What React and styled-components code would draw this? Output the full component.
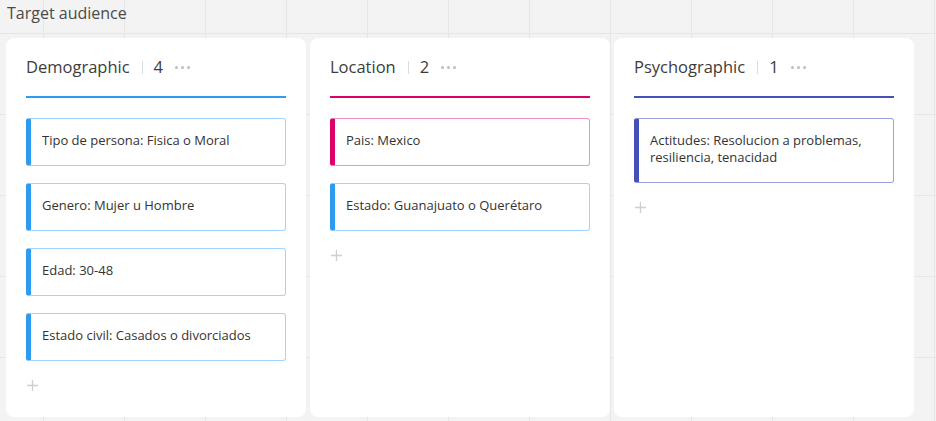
import styled, { createGlobalStyle } from 'styled-components';

const GlobalStyle = createGlobalStyle`
  html, body {
    margin: 0;
    padding: 0;
    height: 100%;
  }

  body {
    font-family: "Open Sans", "Liberation Sans", sans-serif;
    background-color: #f3f3f3;
    background-image:
      linear-gradient(to right, #e6e6e6 1px, transparent 1px),
      linear-gradient(to bottom, #e6e6e6 1px, transparent 1px);
    background-size: 81px 81px;
    background-position: 43px 33px;
    overflow: hidden;
  }
`;

const columns = [
  {
    title: 'Demographic',
    accent: '#2d9bf0',
    soft: '#a3d2fa',
    items: [
      'Tipo de persona: Fisica o Moral',
      'Genero: Mujer u Hombre',
      'Edad: 30-48',
      'Estado civil: Casados o divorciados',
    ],
  },
  {
    title: 'Location',
    accent: '#dc0067',
    soft: '#f293bf',
    items: ['Pais: Mexico', 'Estado: Guanajuato o Querétaro'],
    // second card keeps the default blue sticker colour
    softByItem: ['#f293bf', '#a3d2fa'],
    accentByItem: ['#dc0067', '#2d9bf0'],
  },
  {
    title: 'Psychographic',
    accent: '#4351b8',
    soft: '#9aa2dd',
    items: ['Actitudes: Resolucion a problemas, resiliencia, tenacidad'],
  },
];

const App = () => {
  return (
    <>
      <GlobalStyle />
      <StyledPage>
        <StyledFrameTitle>Target audience</StyledFrameTitle>
        <StyledBoard>
          {columns.map((column) => (
            <StyledColumn key={column.title}>
              <StyledHeader accent={column.accent}>
                <StyledTitle>{column.title}</StyledTitle>
                <StyledSeparator />
                <StyledCount>{column.items.length}</StyledCount>
                <StyledDots>
                  <span />
                  <span />
                  <span />
                </StyledDots>
              </StyledHeader>
              <StyledCards>
                {column.items.map((item, index) => (
                  <StyledCard
                    key={item}
                    accent={column.accentByItem ? column.accentByItem[index] : column.accent}
                    soft={column.softByItem ? column.softByItem[index] : column.soft}>
                    {item}
                  </StyledCard>
                ))}
              </StyledCards>
              <StyledAdd>
                <svg width="11" height="11" viewBox="0 0 11 11">
                  <path d="M5.5 0v11M0 5.5h11" stroke="#cfcfcf" strokeWidth="1.4" fill="none" />
                </svg>
              </StyledAdd>
            </StyledColumn>
          ))}
        </StyledBoard>
      </StyledPage>
    </>
  );
};

const StyledPage = styled.div`
  display: flex;
  flex-direction: column;
  height: 421px;
`;

const StyledFrameTitle = styled.div`
  padding: 2px 0 0 7px;
  height: 38px;
  box-sizing: border-box;
  font-size: 16px;
  line-height: 22px;
  color: #4a4a4a;
`;

const StyledBoard = styled.div`
  display: flex;
  gap: 4px;
  padding-left: 6px;
  flex: 0 0 379px;
`;

const StyledColumn = styled.div`
  width: 300px;
  box-sizing: border-box;
  background: #ffffff;
  border-radius: 8px;
  padding: 18px 20px 0 20px;
  display: flex;
  flex-direction: column;
`;

const StyledHeader = styled.div`
  display: flex;
  align-items: center;
  height: 22px;
  padding-bottom: 18px;
  border-bottom: 2px solid ${(props) => props.accent};
`;

const StyledTitle = styled.span`
  font-size: 16.5px;
  line-height: 22px;
  color: #3c3c3c;
`;

const StyledSeparator = styled.span`
  width: 1px;
  height: 13px;
  background: #dcdcdc;
  margin: 0 11px 0 12px;
`;

const StyledCount = styled.span`
  font-size: 16.5px;
  line-height: 22px;
  color: #3c3c3c;
`;

const StyledDots = styled.span`
  display: flex;
  gap: 3px;
  margin-left: 12px;

  span {
    width: 3px;
    height: 3px;
    border-radius: 50%;
    background: #bdbdbd;
  }
`;

const StyledCards = styled.div`
  display: flex;
  flex-direction: column;
  gap: 17px;
  margin-top: 20px;
`;

const StyledCard = styled.div`
  border: 1px solid ${(props) => props.soft};
  border-left: 5px solid ${(props) => props.accent};
  border-radius: 3px;
  padding: 13px 12px 16px 11px;
  font-size: 13px;
  line-height: 17px;
  color: #333333;
`;

const StyledAdd = styled.div`
  display: flex;
  margin: 19px 0 0 1px;
  height: 11px;
`;

export default App;
